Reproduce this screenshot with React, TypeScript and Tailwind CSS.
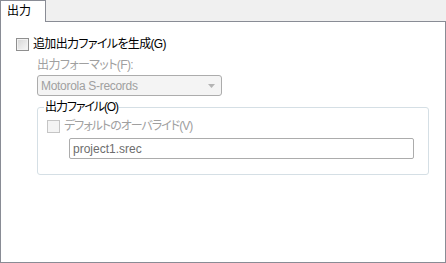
const font = {
	fontFamily: '"Liberation Sans", "Noto Sans CJK JP", sans-serif',
};

function Checkbox({ disabled }: { disabled?: boolean }) {
	return (
		<span
			className={`inline-block shrink-0 w-[13px] h-[13px] border ${
				disabled
					? "border-[#c5c5c5] bg-[#f4f4f4]"
					: "border-[#8f8f8f] bg-gradient-to-br from-[#d6d6d6] to-[#f8f8f8] shadow-[inset_0_0_0_1px_#f2f2f2]"
			}`}
		/>
	);
}

export default function App() {
	return (
		<div
			className="w-[446px] h-[263px] bg-[#f0f0f0] flex flex-col text-[12px] leading-[14px] text-black [font-feature-settings:'palt']"
			style={font}
		>
			{/* Tabs */}
			<div className="flex h-[21px]">
				<div className="relative z-10 w-[46px] h-[22px] bg-white border border-b-0 border-[#898c95] pl-[6px] pt-[3px]">
					出力
				</div>
			</div>

			{/* Panel */}
			<div className="flex-1 bg-white border border-[#898c95] pl-[15px] pt-[15px] pr-[15px]">
				<label className="flex items-center gap-[4px]">
					<Checkbox />
					<span className="tracking-[-0.65px]">追加出力ファイルを生成(G)</span>
				</label>

				<div className="ml-[21px] mt-[7px] text-[#a0a0a0]">
					<div className="tracking-[-0.6px]">出力フォーマット(F):</div>
					<div className="mt-[3px] w-[185px] h-[21px] border border-[#acacac] rounded-[3px] bg-[#f4f4f4] flex items-center justify-between pl-[3px] pr-[6px]">
						<span className="tracking-[-0.3px]">Motorola S-records</span>
						<svg width="7" height="4" viewBox="0 0 7 4">
							<path d="M0 0h7L3.5 4z" fill="#b4b4b4" />
						</svg>
					</div>
				</div>

				{/* Group box */}
				<fieldset className="ml-[21px] mt-[4px] w-[392px] h-[75px] border border-[#d5dfe5] rounded-[3px] px-[9px] pb-0">
					<legend className="px-[1px] -ml-[3px] tracking-[-1.1px]">出力ファイル(O)</legend>
					<label className="flex items-center gap-[4px] text-[#a0a0a0] mt-[5px]">
						<Checkbox disabled />
						<span className="tracking-[-1px]">デフォルトのオーバライド(V)</span>
					</label>
					<div className="ml-[22px] mt-[5px] w-[345px] h-[21px] border border-[#acacac] rounded-[2px] flex items-center pl-[3px] text-[#6d6d6d]">
						project1.srec
					</div>
				</fieldset>
			</div>
		</div>
	);
}
